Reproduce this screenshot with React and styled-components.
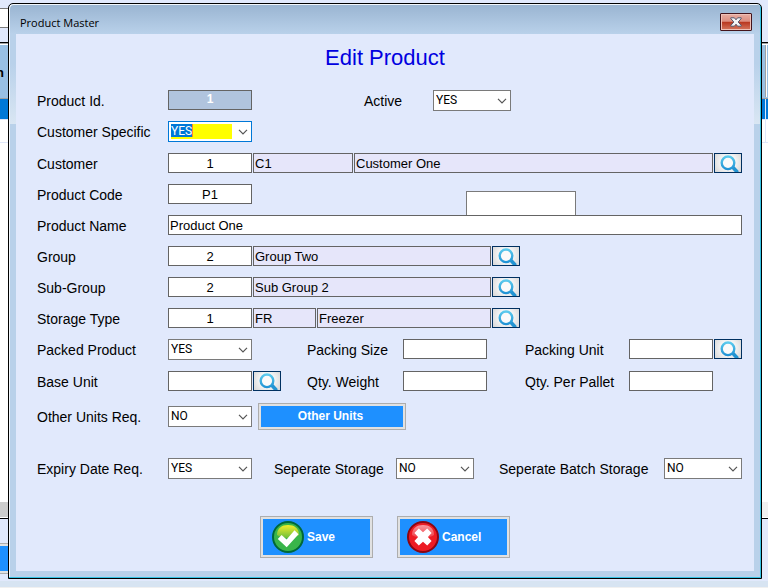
import React, { useId } from "react";
import styled, { createGlobalStyle, css } from "styled-components";

const GlobalStyle = createGlobalStyle`
  *, *::before, *::after { box-sizing: border-box; }
  body {
    margin: 0;
    background: #e1e9fc;
    font-family: "Liberation Sans", Arial, sans-serif;
    color: #000;
  }
  button, input, select { font-family: inherit; margin: 0; border-radius: 0; }
`;

/* ---------- window behind the dialog ---------- */

const Desktop = styled.div`
  display: grid;
  grid-template: minmax(100vh, auto) / minmax(0, 1fr);
  overflow: hidden;

  > * {
    grid-area: 1 / 1;
  }
`;

const Backdrop = styled.div`
  display: flex;
  flex-direction: column;
  background: #e1e9fc;
`;

const SearchStrip = styled.div`
  height: 42px;
  padding-top: 8px;
`;

const SearchBox = styled.div`
  width: 60%;
  height: 20px;
  background: #fff;
  border: 1px solid #7a7a7a;
  border-left: 0;
`;

const ListHead = styled.div`
  display: flex;
  justify-content: space-between;
  align-items: center;
  height: 57px;
  border-top: 1px solid #000;
  border-bottom: 1px solid #a0a0a0;
  box-shadow: inset 0 1px #a0a0a0, inset 0 2px #fff;
  background: #99c0e4;
`;

const HeadCell = styled.span`
  display: flex;
  justify-content: flex-end;
  width: 4px;
  padding-top: 3px;
  overflow: hidden;
  font-size: 13px;
  font-weight: bold;
`;

const HeadDivider = styled.span`
  width: 3px;
  height: 52px;
  border-left: 1px solid #a0a0a0;
  box-shadow: inset 1px 0 #fff;
`;

const ListRow = styled.div`
  height: ${(p) => (p.$selected ? 21 : 23)}px;
  padding-right: 2px;
  border-bottom: 1px solid #dfe7fa;
  background: ${(p) => (p.$selected ? "#0078d7" : "#fff")};

  &::after {
    content: "";
    display: block;
    height: 100%;
    border-right: 1px solid #dfe7fa;
  }
`;

const ListSpace = styled.div`
  flex: 1;
  background: #fff;
`;

const ScrollTrack = styled.div`
  display: flex;
  height: 17px;
  border-bottom: 1px solid #000;
  box-shadow: inset 0 -1px #fff;
  background: #f0f0f0;
`;

const ScrollThumb = styled.div`
  width: 50%;
  height: 15px;
  background: #cdcdcd;
`;

const ToolStrip = styled.div`
  height: 62px;
  padding-top: 24px;
`;

const ToolButton = styled.div`
  width: 50%;
  height: 31px;
  margin-left: -3px;
  background: #1e90ff;
  border: 1px solid #adadad;
  box-shadow: inset 0 0 0 2px #e1e1e1;
`;

const StatusStrip = styled.div`
  height: 7px;
  background: #d7e4f2;
  border-bottom: 1px solid #f0f0f0;
`;

/* ---------- dialog frame ---------- */

const Dialog = styled.section`
  align-self: start;
  margin: 3px 6px 9px 8px;
  padding: 0 7px 7px;
  border: 1px solid #000;
  border-radius: 5px 5px 0 0;
  background: linear-gradient(#99b4d1, #b9d1ea 30px, #b9d1ea 60px, #d9e6f3 120px, #b9d1ea 120px);
  box-shadow: inset -1px -1px #35c3e4, inset 1px 1px #f2f7fc;
`;

const TitleBar = styled.header`
  display: flex;
  justify-content: space-between;
  align-items: flex-start;
  height: 30px;
  padding: 9px 2px 0 4px;
`;

const WindowTitle = styled.span`
  padding-top: 2px;
  font: 11px/16px "Open Sans", sans-serif;
`;

const CloseButton = styled.button`
  display: grid;
  place-items: center;
  width: 32px;
  height: 18px;
  padding: 0;
  border: 1px solid #43141c;
  border-radius: 1px;
  background: linear-gradient(#e9aea3, #dc8d7f 46%, #b8351e 50%, #cf6a52 90%);
  box-shadow: inset 0 0 0 1px #efc0b7;
`;

const Client = styled.form`
  background: #e1e9fc;
  padding-bottom: 13px;
`;

const Heading = styled.h1`
  margin: 0 0 8px;
  font-size: 22px;
  line-height: 48px;
  font-weight: normal;
  text-align: center;
  color: #0000e0;
`;

/* ---------- form parts ---------- */

const Fields = styled.div`
  padding: 0 12px 0 21px;
`;

const Row = styled.div`
  display: grid;
  grid-template-columns: ${(p) => p.$cols || "minmax(0, 1fr)"};
  align-items: start;
  height: 31px;
  margin-top: ${(p) => p.$space || 0}px;
`;

const Pair = styled.div`
  display: grid;
  grid-template-columns: ${(p) => p.$label || 131}px minmax(0, 1fr);
  align-items: start;
`;

const Label = styled.label`
  padding-top: 1px;
  font-size: 14px;
  line-height: 20px;
  white-space: nowrap;
`;

const Controls = styled.div`
  display: flex;
  align-items: flex-start;
  gap: ${(p) => p.$gap || 1}px;
`;

const TextField = styled.input`
  ${(p) => (p.$width ? css`width: ${p.$width}px;` : css`flex: 1; min-width: 0;`)}
  height: 20px;
  padding: 0 1px;
  border: 1px solid #646464;
  background: #fff;
  color: #000;
  font-size: 13px;
  line-height: 18px;
  text-align: ${(p) => (p.$center ? "center" : "left")};
  outline: none;

  &:read-only {
    background: #e6e6fa;
  }

  &:disabled {
    background: #b0c4de;
    color: #fff;
    font-size: 12px;
    font-weight: bold;
    padding-bottom: 3px;
  }
`;

const SpareField = styled.input`
  width: 110px;
  height: 24px;
  margin: 7px 0 0 213px;
  border: 1px solid #7a7a7a;
  border-bottom: 0;
  background: #fff;
  outline: none;
`;

const ComboBox = styled.span`
  display: grid;
  width: ${(p) => p.$width}px;
  height: 21px;

  > * {
    grid-area: 1 / 1;
  }

  > svg {
    place-self: center end;
    margin-right: 4px;
    pointer-events: none;
  }
`;

const ComboSelect = styled.select`
  appearance: none;
  width: 100%;
  height: 21px;
  padding: 0 18px 1px 2px;
  border: 1px solid #7a7a7a;
  background: #fff;
  color: #000;
  font: 12px/18px Roboto, sans-serif;
  outline: none;

  ${(p) =>
    p.$active &&
    css`
      border-color: #0078d7;
      color: #fff;
      background:
        linear-gradient(#0078d7, #0078d7) 2px 2px / 21px 13px no-repeat,
        linear-gradient(#ff8728, #ff8728) 23px 2px / 1px 13px no-repeat,
        linear-gradient(#ff0, #ff0) 2px 2px / 61px 15px no-repeat,
        #fff;
    `}

  option {
    color: #000;
    background: #fff;
  }
`;

const LookupButton = styled.button`
  display: block;
  width: 28px;
  height: 20px;
  padding: 0;
  border: 1px solid #003060;
  background: radial-gradient(circle at 50% 45%, #fff 25%, #d6d6d6 100%);
  overflow: hidden;

  svg {
    display: block;
  }
`;

const ActionButton = styled.button`
  display: flex;
  align-items: center;
  justify-content: ${(p) => (p.$compact ? "center" : "flex-start")};
  gap: 3px;
  width: ${(p) => (p.$compact ? 148 : 113)}px;
  height: ${(p) => (p.$compact ? 27 : 42)}px;
  margin: ${(p) => (p.$compact ? "-3px 0" : 0)};
  padding: ${(p) => (p.$compact ? "0 3px 2px 0" : `0 0 0 ${p.$inset}px`)};
  border: 1px solid #adadad;
  background: #1e90ff;
  box-shadow: inset 0 0 0 2px #e1e1e1;
  color: #fff;
  font-size: 12px;
  line-height: 16px;
  font-weight: bold;
`;

const Actions = styled.div`
  display: flex;
  justify-content: center;
  gap: 24px;
  margin-top: 27px;
`;

/* ---------- drawings ---------- */

const Chevron = () => (
  <svg width="10" height="6" viewBox="0 0 10 6" fill="none" stroke="#555" strokeWidth="1.2" aria-hidden="true">
    <path d="M1 .8 5 4.8 9 .8" />
  </svg>
);

const Magnifier = () => {
  const id = useId();
  return (
    <svg width="26" height="18" viewBox="0 0 26 18" fill="none" aria-hidden="true">
      <defs>
        <linearGradient id={id} x1="0" y1="1" x2="0" y2="18" gradientUnits="userSpaceOnUse">
          <stop offset="0" stopColor="#62d0f0" />
          <stop offset="1" stopColor="#1488d0" />
        </linearGradient>
      </defs>
      <path d="M17.6 13 22.6 18.4" stroke="#2394d2" strokeWidth="3.6" />
      <circle cx="13" cy="8.8" r="6.3" fill="#fafafa" stroke={`url(#${id})`} strokeWidth="2.4" />
    </svg>
  );
};

const CloseGlyph = () => (
  <svg width="12" height="10" viewBox="0 0 12 10" aria-hidden="true">
    <path
      d="M.8.8h3.6L6 2.8 7.6.8h3.6v.8L8.2 5l3 3.4v.8H7.6L6 7.2 4.4 9.2H.8v-.8L3.8 5l-3-3.4z"
      fill="#f4f4f6"
      stroke="#54566b"
      strokeWidth="1"
    />
  </svg>
);

const SaveIcon = () => (
  <svg width="32" height="32" viewBox="0 0 32 32" aria-hidden="true">
    <defs>
      <linearGradient id="save-gloss" x1="0" y1="0" x2="0" y2="1">
        <stop offset="0" stopColor="#f4ee2a" />
        <stop offset="1" stopColor="#6cbf3c" />
      </linearGradient>
    </defs>
    <circle cx="16" cy="16" r="15" fill="#39b54a" stroke="#006837" strokeWidth="2" />
    <path d="M5 14C5 7 10 4 16 4s11 3 11 10c-5 4-17 4-22 0z" fill="url(#save-gloss)" />
    <path d="m9.6 14 5 4.4 7.9-9.2 4 4-11.8 13L5.8 18z" fill="#fff" />
  </svg>
);

const CancelIcon = () => (
  <svg width="32" height="32" viewBox="0 0 32 32" aria-hidden="true">
    <defs>
      <linearGradient id="cancel-gloss" x1="0" y1="0" x2="0" y2="1">
        <stop offset="0" stopColor="#fa9aa0" />
        <stop offset="1" stopColor="#ee3a42" />
      </linearGradient>
    </defs>
    <circle cx="16" cy="16" r="15" fill="#ed1c24" stroke="#8c0612" strokeWidth="2" />
    <path d="M5 14C5 7 10 4 16 4s11 3 11 10c-5 4-17 4-22 0z" fill="url(#cancel-gloss)" />
    <path
      d="m7.4 12 4.4-4.4 4.2 3.7 4.2-3.7 4.4 4.4-3.7 4 3.7 4-4.4 4.4-4.2-3.7-4.2 3.7L7.4 20l3.7-4z"
      fill="#fff"
    />
  </svg>
);

/* ---------- composed controls ---------- */

function Combo({ id, value, width = 84, active }) {
  return (
    <ComboBox $width={width}>
      <ComboSelect id={id} defaultValue={value} $active={active}>
        <option>YES</option>
        <option>NO</option>
      </ComboSelect>
      <Chevron />
    </ComboBox>
  );
}

function Lookup({ label }) {
  return (
    <LookupButton type="button" aria-label={label}>
      <Magnifier />
    </LookupButton>
  );
}

function Field({ id, label, labelWidth, gap, children }) {
  return (
    <Pair $label={labelWidth}>
      <Label htmlFor={id}>{label}</Label>
      <Controls $gap={gap}>{children}</Controls>
    </Pair>
  );
}

const MEASURES = "270px minmax(218px, 1fr) 217px";

export default function App() {
  return (
    <>
      <GlobalStyle />
      <Desktop>
        <Backdrop aria-hidden="true">
          <SearchStrip>
            <SearchBox />
          </SearchStrip>
          <ListHead>
            <HeadCell>n</HeadCell>
            <HeadDivider />
          </ListHead>
          <ListRow $selected />
          <ListRow />
          <ListSpace />
          <ScrollTrack>
            <ScrollThumb />
          </ScrollTrack>
          <ToolStrip>
            <ToolButton />
          </ToolStrip>
          <StatusStrip />
        </Backdrop>

        <Dialog role="dialog" aria-labelledby="window-title">
          <TitleBar>
            <WindowTitle id="window-title">Product Master</WindowTitle>
            <CloseButton type="button" aria-label="Close">
              <CloseGlyph />
            </CloseButton>
          </TitleBar>

          <Client onSubmit={(e) => e.preventDefault()}>
            <Heading>Edit Product</Heading>
            <Fields>
              <Row $cols="327px minmax(0, 1fr)">
                <Field id="product-id" label="Product Id.">
                  <TextField id="product-id" $width={84} $center defaultValue="1" disabled />
                </Field>
                <Field id="active" label="Active" labelWidth={69}>
                  <Combo id="active" value="YES" width={78} />
                </Field>
              </Row>
              <Row>
                <Field id="customer-specific" label="Customer Specific">
                  <Combo id="customer-specific" value="YES" active />
                </Field>
              </Row>

              <Row $space={1}>
                <Field id="customer" label="Customer">
                  <TextField id="customer" $width={84} $center defaultValue="1" />
                  <TextField $width={100} aria-label="Customer code" defaultValue="C1" readOnly />
                  <TextField aria-label="Customer name" defaultValue="Customer One" readOnly />
                  <Lookup label="Find customer" />
                </Field>
              </Row>
              <Row>
                <Field id="product-code" label="Product Code">
                  <TextField id="product-code" $width={84} $center defaultValue="P1" />
                  <SpareField aria-label="Additional code" />
                </Field>
              </Row>
              <Row>
                <Field id="product-name" label="Product Name">
                  <TextField id="product-name" defaultValue="Product One" />
                </Field>
              </Row>
              <Row>
                <Field id="group" label="Group">
                  <TextField id="group" $width={84} $center defaultValue="2" />
                  <TextField $width={238} aria-label="Group name" defaultValue="Group Two" readOnly />
                  <Lookup label="Find group" />
                </Field>
              </Row>
              <Row>
                <Field id="sub-group" label="Sub-Group">
                  <TextField id="sub-group" $width={84} $center defaultValue="2" />
                  <TextField $width={238} aria-label="Sub-group name" defaultValue="Sub Group 2" readOnly />
                  <Lookup label="Find sub-group" />
                </Field>
              </Row>
              <Row>
                <Field id="storage-type" label="Storage Type">
                  <TextField id="storage-type" $width={84} $center defaultValue="1" />
                  <TextField $width={63} aria-label="Storage code" defaultValue="FR" readOnly />
                  <TextField $width={174} aria-label="Storage name" defaultValue="Freezer" readOnly />
                  <Lookup label="Find storage type" />
                </Field>
              </Row>
              <Row $cols={MEASURES}>
                <Field id="packed" label="Packed Product">
                  <Combo id="packed" value="YES" />
                </Field>
                <Field id="packing-size" label="Packing Size" labelWidth={96}>
                  <TextField id="packing-size" $width={84} />
                </Field>
                <Field id="packing-unit" label="Packing Unit" labelWidth={104}>
                  <TextField id="packing-unit" $width={84} />
                  <Lookup label="Find packing unit" />
                </Field>
              </Row>

              <Row $cols={MEASURES} $space={1}>
                <Field id="base-unit" label="Base Unit">
                  <TextField id="base-unit" $width={84} />
                  <Lookup label="Find base unit" />
                </Field>
                <Field id="qty-weight" label="Qty. Weight" labelWidth={96}>
                  <TextField id="qty-weight" $width={84} />
                </Field>
                <Field id="qty-pallet" label="Qty. Per Pallet" labelWidth={104}>
                  <TextField id="qty-pallet" $width={84} />
                </Field>
              </Row>

              <Row $space={4}>
                <Field id="other-units" label="Other Units Req." gap={6}>
                  <Combo id="other-units" value="NO" />
                  <ActionButton type="button" $compact>
                    Other Units
                  </ActionButton>
                </Field>
              </Row>

              <Row $cols="237px minmax(225px, 1fr) 243px" $space={21}>
                <Field id="expiry" label="Expiry Date Req.">
                  <Combo id="expiry" value="YES" />
                </Field>
                <Field id="storage" label="Seperate Storage" labelWidth={122}>
                  <Combo id="storage" value="NO" width={78} />
                </Field>
                <Field id="batch" label="Seperate Batch Storage" labelWidth={165}>
                  <Combo id="batch" value="NO" width={78} />
                </Field>
              </Row>
            </Fields>

            <Actions>
              <ActionButton type="submit" $inset={11}>
                <SaveIcon />
                Save
              </ActionButton>
              <ActionButton type="button" $inset={9}>
                <CancelIcon />
                Cancel
              </ActionButton>
            </Actions>
          </Client>
        </Dialog>
      </Desktop>
    </>
  );
}
